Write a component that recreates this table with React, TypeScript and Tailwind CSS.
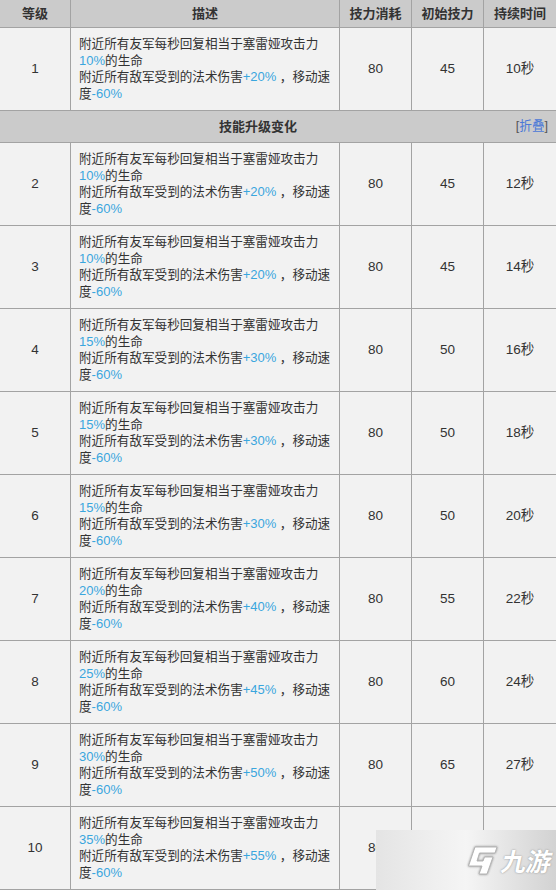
import React from 'react';

interface Level {
  level: number;
  heal: string;
  dmg: string;
  cost: number;
  init: number;
  duration: string;
}

const levels: Level[] = [
  { level: 2, heal: '10%', dmg: '+20%', cost: 80, init: 45, duration: '12秒' },
  { level: 3, heal: '10%', dmg: '+20%', cost: 80, init: 45, duration: '14秒' },
  { level: 4, heal: '15%', dmg: '+30%', cost: 80, init: 50, duration: '16秒' },
  { level: 5, heal: '15%', dmg: '+30%', cost: 80, init: 50, duration: '18秒' },
  { level: 6, heal: '15%', dmg: '+30%', cost: 80, init: 50, duration: '20秒' },
  { level: 7, heal: '20%', dmg: '+40%', cost: 80, init: 55, duration: '22秒' },
  { level: 8, heal: '25%', dmg: '+45%', cost: 80, init: 60, duration: '24秒' },
  { level: 9, heal: '30%', dmg: '+50%', cost: 80, init: 65, duration: '27秒' },
  { level: 10, heal: '35%', dmg: '+55%', cost: 80, init: 70, duration: '30秒' },
];

const headers = ['等级', '描述', '技力消耗', '初始技力', '持续时间'];

const Cell = ({ children }: { children: React.ReactNode }) => (
  <div className="bg-[#f2f2f2] flex items-center justify-center text-[13.5px] text-[#333]">
    {children}
  </div>
);

const Row = ({ row }: { row: Level }) => (
  <>
    <Cell>{row.level}</Cell>
    <div className="bg-[#f2f2f2] flex flex-col justify-center pl-2 text-[12.6px] leading-[16.5px] text-[#333] whitespace-nowrap">
      <div>附近所有友军每秒回复相当于塞雷娅攻击力</div>
      <div>
        <span className="text-[#3aa6de] text-[13px]">{row.heal}</span>的生命
      </div>
      <div>
        附近所有敌军受到的法术伤害<span className="text-[#3aa6de] text-[13px]">{row.dmg}</span> ，移动速
      </div>
      <div>
        度<span className="text-[#3aa6de] text-[13px]">-60%</span>
      </div>
    </div>
    <Cell>{row.cost}</Cell>
    <Cell>{row.init}</Cell>
    <Cell>{row.duration}</Cell>
  </>
);

// 九游 watermark in the bottom right corner
const Watermark = () => (
  <div className="absolute right-0 bottom-0 w-[180px] h-[60px] bg-gradient-to-r from-[#e4e4e4] via-[#f5f5f5] to-[#d2d2d2] flex items-center justify-end pr-1 gap-1">
    <svg width="32" height="29" viewBox="0 0 32 29" className="drop-shadow-[0_0_1px_#8a8a8a]">
      <path
        d="M9 1 H31 L29 7 H13.5 L11 15 H17 L18.5 11 H27 L21 28 H13 L16 20 H2.5 Z"
        fill="#ffffff"
        stroke="#b5b5b5"
        strokeWidth="1"
        strokeLinejoin="round"
      />
    </svg>
    <span className="inline-block -skew-x-12 font-bold text-[25px] leading-none text-white font-['Noto_Sans_CJK_SC',sans-serif] [text-shadow:0_0_2px_#8a8a8a]">
      九游
    </span>
  </div>
);

export default function App() {
  return (
    <div className="relative w-[556px] h-[890px] overflow-hidden bg-white font-['Liberation_Sans','Noto_Sans_CJK_SC',sans-serif]">
      <div className="grid grid-cols-[70px_268px_71px_71px_72px] grid-rows-[27px_82px_31px_repeat(9,82px)] gap-px pb-px bg-[#a3a3a3]">
        {headers.map((h) => (
          <div key={h} className="bg-[#cbcbcb] flex items-center justify-center text-[13px] font-bold text-[#333]">
            {h}
          </div>
        ))}

        <Row row={{ level: 1, heal: '10%', dmg: '+20%', cost: 80, init: 45, duration: '10秒' }} />

        <div className="col-span-5 bg-[#cbcbcb] flex items-center pr-2">
          <div className="flex-1 text-center text-[13px] font-bold text-[#333]">技能升级变化</div>
          <span className="text-[12.6px] text-[#555]">
            [<span className="text-[#4a78d8]">折叠</span>]
          </span>
        </div>

        {levels.map((row) => (
          <Row key={row.level} row={row} />
        ))}
      </div>
      <Watermark />
    </div>
  );
}
